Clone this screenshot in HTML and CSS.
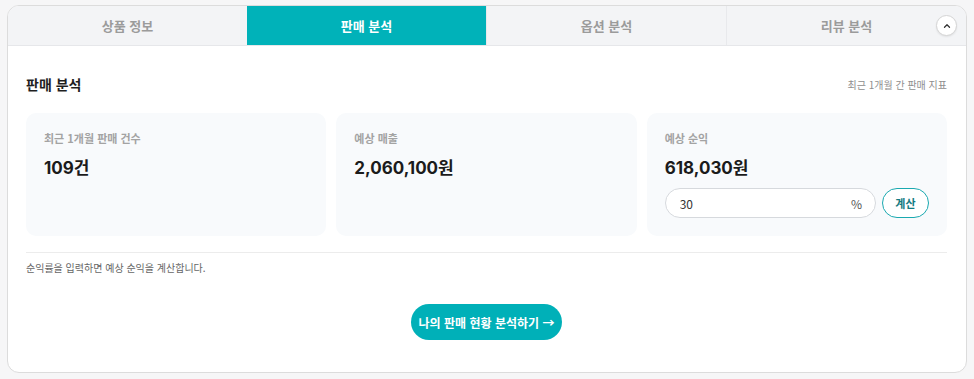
FILE: index.html
```html
<!DOCTYPE html>
<html lang="ko">
<head>
  <meta charset="UTF-8" />
  <meta name="viewport" content="width=device-width, initial-scale=1.0"/>
  <title>판매 분석</title>
  <link rel="stylesheet" href="styles.css">
</head>
<body>

  <div class="panel">
    <!-- 탭 -->
    <nav class="tabs">
      <div class="tab">상품 정보</div>
      <div class="tab active">판매 분석</div>
      <div class="tab">옵션 분석</div>
      <div class="tab">리뷰 분석</div>
      <button class="toggle" type="button" aria-label="접기">
        <svg width="10" height="10" viewBox="0 0 10 10"><path d="M2.5 6.2 L5 3.7 L7.5 6.2" fill="none" stroke="#333" stroke-width="1.3" stroke-linecap="round" stroke-linejoin="round"/></svg>
      </button>
    </nav>

    <section class="content">
      <div class="section-head">
        <h2>판매 분석</h2>
        <span class="sub">최근 1개월 간 판매 지표</span>
      </div>

      <div class="cards">
        <div class="card">
          <p class="label">최근 1개월 판매 건수</p>
          <p class="value">109건</p>
        </div>
        <div class="card">
          <p class="label">예상 매출</p>
          <p class="value">2,060,100원</p>
        </div>
        <div class="card">
          <p class="label">예상 순익</p>
          <p class="value">618,030원</p>
          <div class="calc">
            <label class="rate">
              <input type="text" value="30">
              <span>%</span>
            </label>
            <button class="calc-btn" type="button">계산</button>
          </div>
        </div>
      </div>

      <p class="note">순익률을 입력하면 예상 순익을 계산합니다.</p>

      <div class="cta-wrap">
        <button class="cta" type="button">나의 판매 현황 분석하기 →</button>
      </div>
    </section>
  </div>

</body>
</html>
```

FILE: styles.css
```css
* {
  margin: 0;
  padding: 0;
  box-sizing: border-box;
  font-family: 'Noto Sans CJK KR', 'Noto Sans', sans-serif;
}

body {
  background-color: #f6f6f7;
  padding: 5px 7px 6px 7px;
}

.panel {
  width: 960px;
  height: 368px;
  background-color: #ffffff;
  border: 1px solid #dcdcdc;
  border-radius: 12px;
  overflow: hidden;
}

.tabs {
  display: flex;
  position: relative;
  height: 40px;
  background-color: #f3f4f6;
  border-bottom: 1px solid #e6e7ea;
}

.tab {
  flex: 1;
  display: flex;
  align-items: center;
  justify-content: center;
  font-size: 13px;
  font-weight: 700;
  color: #9b9b9b;
}

.tab + .tab {
  border-left: 1px solid #e8e9ec;
}

.tab.active {
  background-color: #00b2b9;
  color: #ffffff;
  border-left: none;
}

.toggle {
  position: absolute;
  right: 9px;
  top: 9px;
  width: 21px;
  height: 21px;
  border-radius: 50%;
  border: 1px solid #d4d4d4;
  background-color: #ffffff;
  display: flex;
  align-items: center;
  justify-content: center;
  box-shadow: 0 1px 2px rgba(0,0,0,0.08);
}

.content {
  padding: 28px 19px 0 18px;
}

.section-head {
  display: flex;
  justify-content: space-between;
  align-items: center;
  margin-bottom: 19px;
}

.section-head h2 {
  font-size: 14px;
  font-weight: 700;
  color: #1f1f1f;
}

.section-head .sub {
  font-size: 10px;
  color: #8e8e8e;
}

.cards {
  display: flex;
  gap: 10px;
  padding-bottom: 16px;
  border-bottom: 1px solid #ececec;
}

.card {
  flex: 1;
  height: 123px;
  background-color: #f8fafc;
  border-radius: 10px;
  padding: 17px 18px 15px 18px;
}

.label {
  font-size: 11px;
  font-weight: 700;
  color: #a3a3a3;
  margin-bottom: 8px;
}

.value {
  font-family: Inter, 'Noto Sans CJK KR', sans-serif;
  font-size: 17px;
  font-weight: 700;
  color: #1b1b1b;
}

.calc {
  display: flex;
  gap: 6px;
  margin-top: 9px;
}

.rate {
  flex: 1;
  display: flex;
  align-items: center;
  height: 30px;
  padding: 0 13px 0 14px;
  background-color: #ffffff;
  border: 1px solid #d6d9dd;
  border-radius: 15px;
}

.rate input {
  flex: 1;
  border: none;
  outline: none;
  background: transparent;
  font-size: 12px;
  color: #333;
  width: 100%;
}

.rate span {
  font-size: 12px;
  color: #555;
}

.calc-btn {
  width: 47px;
  height: 30px;
  border: 1.5px solid #1aa9b0;
  border-radius: 15px;
  background-color: #ffffff;
  color: #137b82;
  font-size: 11px;
  font-weight: 700;
}

.note {
  font-size: 10px;
  color: #666;
  margin-top: 7px;
}

.cta-wrap {
  display: flex;
  justify-content: center;
  margin-top: 29px;
}

.cta {
  width: 151px;
  height: 36px;
  border: none;
  border-radius: 18px;
  background-color: #00b0b8;
  color: #ffffff;
  font-size: 12px;
  font-weight: 700;
}
```
